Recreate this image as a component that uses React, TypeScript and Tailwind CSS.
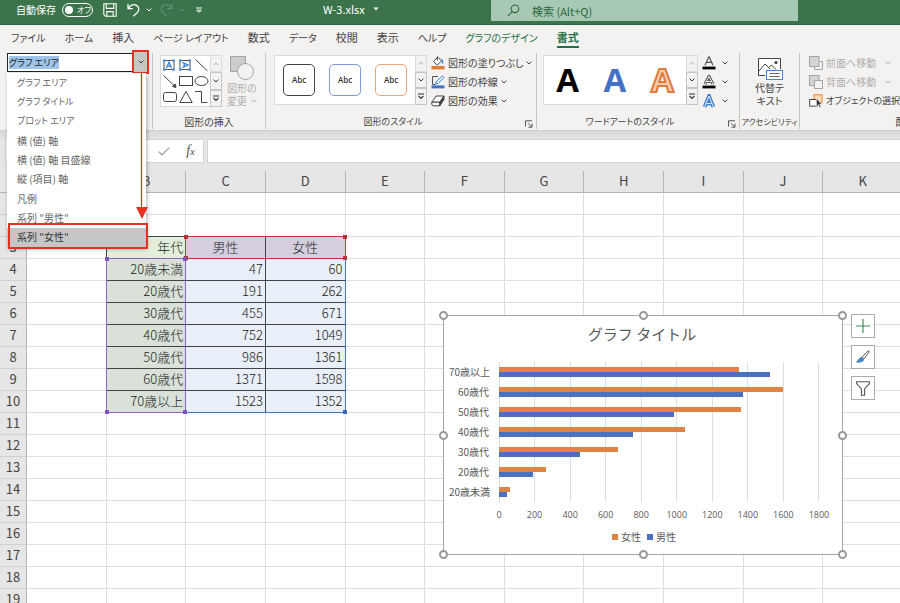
import { useEffect, useRef, type ReactNode } from "react";

/* ---------- data ---------- */

const TABS = ["ファイル", "ホーム", "挿入", "ページ レイアウト", "数式", "データ", "校閲", "表示", "ヘルプ"];
const KANJI_TABS = ["挿入", "数式", "校閲", "表示"];

const CHART_PARTS = [
  "グラフ エリア",
  "グラフ タイトル",
  "プロット エリア",
  "横 (値) 軸",
  "横 (値) 軸 目盛線",
  "縦 (項目) 軸",
  "凡例",
  '系列 "男性"',
  '系列 "女性"',
];

const COLUMNS = ["A", "B", "C", "D", "E", "F", "G", "H", "I", "J", "K"];

const DATA = [
  { age: "20歳未満", male: 47, female: 60 },
  { age: "20歳代", male: 191, female: 262 },
  { age: "30歳代", male: 455, female: 671 },
  { age: "40歳代", male: 752, female: 1049 },
  { age: "50歳代", male: 986, female: 1361 },
  { age: "60歳代", male: 1371, female: 1598 },
  { age: "70歳以上", male: 1523, female: 1352 },
];

const AXIS_MAX = 1800;
const AXIS_TICKS = [0, 200, 400, 600, 800, 1000, 1200, 1400, 1600, 1800];

/* ---------- small pieces ---------- */

function Chevron({ className = "" }: { className?: string }) {
  return (
    <svg viewBox="0 0 6 4" className={`h-1 w-1.5 shrink-0 ${className}`} fill="none" stroke="currentColor" strokeWidth="1">
      <path d="M0.6 0.6 L3 3 L5.4 0.6" />
    </svg>
  );
}

function GalleryScroll() {
  const cell = "flex flex-1 items-center justify-center border border-[#c8c6c4] bg-[#f3f2f1] text-[#333]";
  return (
    <div className="-my-px -mr-px flex w-3 shrink-0 flex-col">
      <button aria-label="前の行" className="flex flex-1 items-center justify-center border border-[#dddbd9] bg-[#f3f2f1] text-[#b5b5b5]">
        <Chevron className="rotate-180" />
      </button>
      <button aria-label="次の行" className={cell}>
        <Chevron />
      </button>
      <button aria-label="その他" className={cell}>
        <svg viewBox="0 0 8 7" className="h-[7px] w-2" fill="none" stroke="currentColor" strokeWidth="1.1">
          <path d="M1 1 H7 M1.6 3 L4 5.4 L6.4 3" />
        </svg>
      </button>
    </div>
  );
}

function Launcher() {
  return (
    <button aria-label="詳細設定" className="absolute right-0.5 bottom-0 flex h-2.5 w-2.5 items-center justify-center text-[#555]">
      <svg viewBox="0 0 8 8" className="h-2 w-2" fill="none" stroke="currentColor" strokeWidth="1">
        <path d="M0.5 6.5 V0.8 H7 M3 3.2 L6.6 6.8 M7 3.6 V7.2 H3.4" />
      </svg>
    </button>
  );
}

function Group({
  label,
  labelClass = "text-[10px]",
  className,
  launcher,
  children,
}: {
  label?: string;
  labelClass?: string;
  className: string;
  launcher?: boolean;
  children: ReactNode;
}) {
  return (
    <section className={`relative flex h-[76px] shrink-0 flex-col border-r border-[#c8c6c4] ${className}`}>
      <div className="flex flex-1 items-start">{children}</div>
      {label && (
        <h2 className={`text-center leading-[14px] whitespace-nowrap text-[#444] ${labelClass} ${launcher ? "pr-4" : ""}`}>{label}</h2>
      )}
      {launcher && <Launcher />}
    </section>
  );
}

/* ---------- title bar ---------- */

function TitleBar() {
  return (
    <header className="flex h-[25px] shrink-0 items-start border-b border-[#2b6440] bg-[#3b744b] pl-4 text-white">
      <div className="flex w-[307px] shrink-0 items-center pt-0.5">
        <label className="flex items-center gap-1.5 text-[10px] leading-4">
          自動保存
          <input type="checkbox" role="switch" className="sr-only" />
          <span className="flex h-3.5 w-[31px] items-center gap-1 rounded-full border border-white pl-0.5 text-[8px] leading-3">
            <span className="h-2 w-2 rounded-full bg-white" />
            オフ
          </span>
        </label>
        <button aria-label="上書き保存" className="ml-2.5">
          <svg viewBox="0 0 14 14" className="h-3.5 w-3.5" fill="none" stroke="currentColor" strokeWidth="1.1">
            <path d="M0.8 0.8 H13.2 V13.2 H2.4 L0.8 11.6 Z M3.2 0.8 V5.4 H10.8 V0.8 M3.8 13 V8.6 H10.2 V13" />
          </svg>
        </button>
        <button aria-label="元に戻す" className="ml-2.5 flex items-center gap-1.5">
          <svg viewBox="0 0 13 14" className="h-3.5 w-[13px]" fill="none" stroke="currentColor" strokeWidth="1.3">
            <path d="M1 0.8 V5.6 H5.8 M1.2 5.4 C3.4 2.4 6.4 1 9 2.2 C12.2 3.8 12.6 7.2 10.4 9.4 L6.4 13.2" />
          </svg>
          <Chevron />
        </button>
        <button aria-label="やり直し" disabled className="ml-2 flex items-center gap-1.5 text-[#62916f]">
          <svg viewBox="0 0 13 14" className="h-3.5 w-[13px]" fill="none" stroke="currentColor" strokeWidth="1.3">
            <path d="M12 0.8 V5.6 H7.2 M11.8 5.4 C9.6 2.4 6.6 1 4 2.2 C0.8 3.8 0.4 7.2 2.6 9.4 L6.6 13.2" />
          </svg>
          <Chevron />
        </button>
        <button aria-label="クイック アクセス ツール バーのユーザー設定" className="ml-2.5">
          <svg viewBox="0 0 8 7" className="h-[7px] w-2" fill="none" stroke="currentColor" strokeWidth="1">
            <path d="M1 1 H7 M1.8 3.2 H6.2 L4 5.4 Z" />
          </svg>
        </button>
      </div>
      <button className="flex w-[168px] shrink-0 items-center gap-2 pt-px text-[11px] leading-4">
        W-3.xlsx
        <svg viewBox="0 0 6 4" className="h-1 w-1.5" fill="currentColor">
          <path d="M0.4 0.4 H5.6 L3 3.4 Z" />
        </svg>
      </button>
      <div className="flex h-[21px] w-[307px] items-center gap-3 bg-[#a7c9b3] pl-4 text-[#2c6540]">
        <svg viewBox="0 0 13 13" className="h-[13px] w-[13px] shrink-0" fill="none" stroke="currentColor" strokeWidth="1.1">
          <circle cx="8" cy="4.8" r="3.8" />
          <path d="M5.2 7.6 L0.8 12.2" />
        </svg>
        <input
          type="search"
          aria-label="検索"
          placeholder="検索 (Alt+Q)"
          className="h-[18px] w-full bg-transparent text-[11px] leading-[18px] outline-none placeholder:text-[#2c6540]"
        />
      </div>
    </header>
  );
}

/* ---------- tabs ---------- */

function Tabs() {
  return (
    <nav className="flex h-[25px] shrink-0 items-start gap-[19px] bg-[#f3f2f1] pt-1 pl-[11px] whitespace-nowrap text-[#444]">
      {TABS.map((t) => (
        <button key={t} className={`leading-[17px] ${KANJI_TABS.includes(t) ? "text-[11px]" : "text-[10px]"}`}>
          {t}
        </button>
      ))}
      <button className="text-[10px] leading-[17px] text-[#1f7145]">グラフのデザイン</button>
      <button className="border-b-2 border-[#1f7145] text-[11px] leading-[17px] font-bold text-[#1f7145]">書式</button>
    </nav>
  );
}

/* ---------- ribbon ---------- */

function ElementPicker() {
  const box = useRef<HTMLInputElement>(null);
  useEffect(() => {
    box.current?.focus();
    box.current?.select();
  }, []);
  return (
    <div className="relative ml-[7px] flex h-[19px] w-[141px]">
      <input
        ref={box}
        aria-label="グラフ要素"
        defaultValue="グラフ エリア"
        className="min-w-0 flex-1 border border-r-0 border-[#222] bg-white pl-px text-[9px] text-[#222] outline-none selection:bg-[#9fc4ea] selection:text-[#222]"
      />
      <button aria-label="一覧を開く" className="-mt-[3px] -mr-px -mb-0.5 flex w-[17px] items-center justify-center border-2 border-[#e8301f] bg-[#c6c6c6] text-[#333]">
        <Chevron />
      </button>
      <ul
        role="listbox"
        aria-label="グラフ要素"
        className="absolute top-5 left-0 z-20 grid h-[174px] w-[139px] grid-rows-9 bg-white text-[10px] leading-4 text-[#666] shadow-[1px_2px_4px_rgba(0,0,0,0.3)]"
      >
        {CHART_PARTS.map((p, i) => {
          const last = i === CHART_PARTS.length - 1;
          return (
            <li
              key={p}
              role="option"
              aria-selected={last}
              className={`flex items-center pl-2.5 ${i < 3 ? "text-[9px]" : ""} ${last ? "bg-[#c6c6c6] text-[#333]" : ""}`}
            >
              {p}
            </li>
          );
        })}
      </ul>
      {/* callout: arrow from the drop-down button to the highlighted entry */}
      <svg viewBox="0 0 12 147" className="absolute top-5 left-[129px] z-30 h-[147px] w-3">
        <path d="M5.5 0 V138" stroke="#e8301f" strokeWidth="1.3" />
        <path d="M0 134 H12 L6 146 Z" fill="#e8301f" />
      </svg>
      <div className="absolute top-[170px] left-px z-30 h-[26px] w-[140px] border-2 border-[#e8301f]" />
    </div>
  );
}

function ShapesGallery() {
  return (
    <div className="ml-[7px] flex h-[52px] w-[62px] shrink-0 border border-[#dddbd9] bg-white">
      <svg viewBox="0 0 49 50" className="h-[50px] w-[49px] shrink-0" fill="none" stroke="#444" strokeWidth="1">
        <g stroke="#555">
          <rect x="3" y="4.5" width="10" height="9" />
          <rect x="19" y="4.5" width="10" height="9" />
        </g>
        <g fill="#4a8fd8" stroke="none">
          {[2, 11.5, 18, 27.5].map((x) => (
            <g key={x}>
              <rect x={x} y="3.4" width="2.4" height="2.4" />
              <rect x={x} y="12.4" width="2.4" height="2.4" />
            </g>
          ))}
        </g>
        <g stroke="#3b83d0" strokeWidth="1.3">
          <path d="M5.4 12 L8 6.2 L10.6 12 M6.4 10.2 H9.6" />
          <path d="M21.4 6.4 L27 9 L21.4 11.6 M23.2 7.4 V10.6" />
        </g>
        <path d="M34.5 3.5 L46.5 15" />
        <path d="M2.5 19.5 L13.5 30" />
        <path d="M15 31.4 L11.6 30.6 L14.2 28 Z" fill="#444" />
        <rect x="18.5" y="20.5" width="13" height="9" />
        <ellipse cx="40.5" cy="25" rx="6.5" ry="4.5" />
        <rect x="2.5" y="36.5" width="13" height="9" rx="2.2" />
        <path d="M18.8 46.5 L25 35.5 L31.2 46.5 Z" />
        <path d="M34 35.5 H40.5 V46.5 H46.5" />
      </svg>
      <GalleryScroll />
    </div>
  );
}

function RibbonRow({
  icon,
  label,
  disabled,
  size = "text-[10px]",
  menu = true,
}: {
  icon: ReactNode;
  label: string;
  disabled?: boolean;
  size?: string;
  menu?: boolean;
}) {
  return (
    <button disabled={disabled} className={`flex h-[19px] items-center gap-[3px] whitespace-nowrap ${size} ${disabled ? "text-[#b0aeac]" : "text-[#444]"}`}>
      {icon}
      {label}
      {menu && <Chevron className={disabled ? "ml-1.5" : ""} />}
    </button>
  );
}

const small = "h-3.5 w-3.5 shrink-0";

const FillIcon = (
  <svg viewBox="0 0 14 14" className={small} fill="none">
    <rect x="0.5" y="10" width="13" height="3.4" fill="#e07b39" />
    <path d="M2.4 5.4 L6.8 1.2 L10.6 5 L6.2 9 Z" fill="#fff" stroke="#444" />
    <path d="M6.4 0.4 V4.4" stroke="#444" />
    <path d="M10 3 C12 3.4 12.6 5.4 12.2 8.4 C11 7.4 10.6 6 10.6 4.6" fill="#2f7fd1" />
  </svg>
);

const OutlineIcon = (
  <svg viewBox="0 0 14 14" className={small} fill="none">
    <rect x="0.5" y="10.4" width="13" height="3" fill="#4472c4" />
    <path d="M7 1.5 H1.5 V9.5 H4" stroke="#555" />
    <path d="M11.4 0.8 L13 2.4 L7 8.4 L4.6 9.2 L5.2 6.8 Z" fill="#fff" stroke="#2f7fd1" />
  </svg>
);

const EffectIcon = (
  <svg viewBox="0 0 14 14" className={small} stroke="#444" strokeLinejoin="round">
    <path d="M0.8 8.2 L5.2 2 H13 L8.8 8.2 Z" fill="#fff" />
    <path d="M0.8 8.2 H8.8 V11.8 H2.4 Q0.8 11.8 0.8 10.2 Z" fill="#fff" />
    <path d="M8.8 8.2 L13 2 V5.4 L8.8 11.8 Z" fill="#444" />
  </svg>
);

const ForwardIcon = (
  <svg viewBox="0 0 14 14" className={small} fill="none" stroke="#a6a4a2">
    <path d="M10.5 5.5 H13.5 V13.5 H5.5 V11" />
    <rect x="0.5" y="0.5" width="9.5" height="10" fill="#d6d4d2" />
  </svg>
);

const BackwardIcon = (
  <svg viewBox="0 0 14 14" className={small} stroke="#a6a4a2">
    <rect x="0.5" y="0.5" width="9.5" height="10" fill="#d6d4d2" />
    <rect x="5.5" y="5.5" width="8" height="8" fill="#f3f2f1" />
  </svg>
);

const SelectionIcon = (
  <svg viewBox="0 0 14 14" className={small}>
    <rect x="5" y="0.8" width="8" height="8" fill="#fbd9b8" stroke="#e8833a" />
    <rect x="0.7" y="5.5" width="7.6" height="6.6" fill="#fff" stroke="#444" />
    <path d="M7.4 4.4 V12.4 L9.2 10.8 L10.6 13.6 L12 12.8 L10.6 10.2 H13 Z" fill="#333" stroke="#fff" strokeWidth="0.6" />
  </svg>
);

function LetterIcon({ kind }: { kind: "fill" | "outline" | "effect" }) {
  return (
    <svg viewBox="0 0 14 14" className={small} fill="none">
      {kind === "fill" && <path d="M3 9.2 L7 0.6 L11 9.2 M4.4 6.4 H9.6" stroke="#555" strokeWidth="1.2" />}
      {kind === "outline" && (
        <>
          <path d="M3 9.2 L7 1.2 L11 9.2 M4.6 6.6 H9.4" stroke="#444" strokeWidth="2.8" />
          <path d="M3 9.2 L7 1.2 L11 9.2 M4.6 6.6 H9.4" stroke="#fff" strokeWidth="1" />
        </>
      )}
      {kind === "effect" && (
        <>
          <path d="M2.6 13 L7 2 L11.4 13 M4.4 9.6 H9.6" stroke="#3d7bd0" strokeWidth="3.6" />
          <path d="M2.6 13 L7 2 L11.4 13 M4.4 9.6 H9.6" stroke="#e8f1fb" strokeWidth="1" />
        </>
      )}
      {kind !== "effect" && <rect x="0.5" y="10.6" width="13" height="2.8" fill="#000" />}
    </svg>
  );
}

function Ribbon() {
  return (
    <div className="flex h-[81px] shrink-0 border-b border-[#cfcdcb] bg-[#f3f2f1] pt-[3px]">
      <Group className="w-[153px]">
        <ElementPicker />
      </Group>

      <Group className="w-[113px]" label="図形の挿入">
        <div className="flex items-start pt-0.5">
          <ShapesGallery />
          <button disabled className="flex w-10 flex-col items-center text-[10px] leading-[13px] text-[#b0aeac]">
            <svg viewBox="0 0 26 26" className="h-[26px] w-[26px]" stroke="#a6a4a2" fill="#f3f2f1">
              <rect x="1.5" y="1.5" width="15" height="15" fill="#cfcdcb" />
              <circle cx="16.5" cy="16.5" r="8" />
            </svg>
            図形の
            <span className="flex items-center gap-1">
              変更
              <Chevron />
            </span>
          </button>
        </div>
      </Group>

      <Group className="w-[271px]" label="図形のスタイル" labelClass="text-[9px]" launcher>
        <div className="mt-0.5 ml-2 flex h-[50px] w-[153px] shrink-0 border border-[#dddbd9] bg-white">
          <div className="flex flex-1 items-center justify-between px-2 font-['Open_Sans'] text-[8px] font-semibold text-[#333]">
            <button className="h-8 w-8 rounded-[5px] border border-[#444]">Abc</button>
            <button className="h-8 w-8 rounded-[5px] border border-[#7d9fd3]">Abc</button>
            <button className="h-8 w-8 rounded-[5px] border border-[#eda677]">Abc</button>
          </div>
          <GalleryScroll />
        </div>
        <div className="ml-1 flex flex-col">
          <RibbonRow icon={FillIcon} label="図形の塗りつぶし" />
          <RibbonRow icon={OutlineIcon} label="図形の枠線" />
          <RibbonRow icon={EffectIcon} label="図形の効果" />
        </div>
      </Group>

      <Group className="w-[203px]" label="ワードアートのスタイル" labelClass="text-[9px]" launcher>
        <div className="mt-0.5 ml-1.5 flex h-[50px] w-[155px] shrink-0 border border-[#dddbd9] bg-white">
          <div className="flex flex-1 items-center justify-around font-['Open_Sans'] text-[33px] leading-[48px] font-bold">
            <button className="text-black">A</button>
            <button className="text-[#4472c4]">A</button>
            <button className="text-[#f6cdb0] [-webkit-text-stroke:2px_#e07b39]">A</button>
          </div>
          <GalleryScroll />
        </div>
        <div className="ml-1 flex flex-col text-[#444]">
          {(["fill", "outline", "effect"] as const).map((k) => (
            <button key={k} aria-label={k} className="flex h-[19px] items-center gap-1.5">
              <LetterIcon kind={k} />
              <Chevron />
            </button>
          ))}
        </div>
      </Group>

      <Group className="w-[60px]" label="アクセシビリティ" labelClass="text-[8px]">
        <button className="flex w-full flex-col items-center pt-1 text-[10px] leading-[13px] text-[#444]">
          <svg viewBox="0 0 26 24" className="h-6 w-[26px]" fill="none" stroke="#444">
            <path d="M8 18.5 H1.5 V1.5 H23.5 V12" fill="#fff" />
            <path d="M2 14 L8 7 L13 12 M11.5 10.5 L14.5 8 L19 12.5" />
            <circle cx="19" cy="5.5" r="1.6" fill="#444" stroke="none" />
            <rect x="9.5" y="13.5" width="16" height="9" fill="#fff" stroke="#3b8ad8" />
            <path d="M12.5 16.5 H22.5 M12.5 19.5 H22.5" stroke="#666" />
          </svg>
          代替テ
          <br />
          キスト
        </button>
      </Group>

      <Group className="w-[212px]" label="配置">
        <div className="ml-[9px] flex flex-col">
          <RibbonRow icon={ForwardIcon} label="前面へ移動" disabled />
          <RibbonRow icon={BackwardIcon} label="背面へ移動" disabled />
          <RibbonRow icon={SelectionIcon} label="オブジェクトの選択と表示" size="text-[9px]" menu={false} />
        </div>
      </Group>
    </div>
  );
}

/* ---------- formula bar ---------- */

function FormulaBar() {
  return (
    <div className="flex h-10 shrink-0 items-start gap-[3px] bg-linear-to-b from-[#d9d9d9] to-[#e6e6e6] to-25% pt-2 pl-[5px]">
      <div className="flex h-6 w-[199px] shrink-0 items-center justify-end gap-4 border border-[#d4d4d4] bg-white pr-2">
        <svg viewBox="0 0 12 9" className="h-[9px] w-3" fill="none" stroke="#b0b0b0" strokeWidth="1.6">
          <path d="M0.8 4.6 L4 7.8 L11.2 0.8" />
        </svg>
        <button aria-label="関数の挿入" className="font-['Liberation_Serif'] text-sm text-[#555] italic">
          f<span className="text-[11px]">x</span>
        </button>
      </div>
      <input aria-label="数式バー" className="h-6 min-w-0 flex-1 border border-r-0 border-[#d4d4d4] bg-white px-1 text-xs outline-none" />
    </div>
  );
}

/* ---------- worksheet ---------- */

function RangeFrame({ className, handle }: { className: string; handle: string }) {
  return (
    <div className={`pointer-events-none absolute z-10 border ${className}`}>
      <i className={`absolute -top-0.5 -left-0.5 h-1 w-1 ${handle}`} />
      <i className={`absolute -top-0.5 -right-0.5 h-1 w-1 ${handle}`} />
      <i className={`absolute -bottom-0.5 -left-0.5 h-1 w-1 ${handle}`} />
      <i className={`absolute -right-0.5 -bottom-0.5 h-1 w-1 ${handle}`} />
    </div>
  );
}

function Cell({ row, col }: { row: number; col: string }) {
  const base = "relative h-[22px] border-r border-b pt-0 pb-0.5 pl-0";
  const record = DATA[row - 4];
  if (row === 2 && (col === "B" || col === "C" || col === "D")) {
    return <td className={`${base} border-r-[#dedede] border-b-[#444]`} />;
  }
  if (row === 3) {
    if (col === "A") return <td className={`${base} border-r-[#444] border-b-[#dedede]`} />;
    if (col === "B") return <td className={`${base} border-[#444] bg-[#e2eeda] pr-0.5 text-right`}>年代</td>;
    if (col === "C")
      return (
        <td className={`${base} border-[#444] bg-[#d5cedf] text-center`}>
          男性
          <RangeFrame className="-top-px -left-px h-[23px] w-[calc(200%+3px)] border-[#c0343c]" handle="bg-[#b5323a]" />
        </td>
      );
    if (col === "D") return <td className={`${base} border-[#444] bg-[#d5cedf] text-center`}>女性</td>;
  }
  if (record) {
    if (col === "B")
      return (
        <td className={`${base} border-[#444] bg-[#d9e1d8] pr-0.5 text-right`}>
          {record.age}
          {row === 4 && <RangeFrame className="-top-px -left-px h-[155px] w-[calc(100%+2px)] border-[#8c62c4]" handle="bg-[#7f56bd]" />}
        </td>
      );
    if (col === "C")
      return (
        <td className={`${base} border-[#444] bg-[#e9eff8] pr-0.5 text-right`}>
          {record.male}
          {row === 10 && (
            <div className="pointer-events-none absolute -bottom-px left-0 z-10 h-[154px] w-[calc(200%+2px)] border-r border-b border-[#4472c4]">
              <i className="absolute -right-0.5 -bottom-0.5 h-1 w-1 bg-[#3a66b8]" />
            </div>
          )}
        </td>
      );
    if (col === "D") return <td className={`${base} border-[#444] bg-[#e9eff8] pr-0.5 text-right`}>{record.female}</td>;
  }
  return <td className={`${base} border-[#dedede]`} />;
}

function Sheet() {
  const rows = Array.from({ length: 19 }, (_, i) => i + 1);
  return (
    <table className="w-[calc(100%+3px)] table-fixed border-separate border-spacing-0 text-[13px] leading-[19px] font-light text-[#222]">
      <thead>
        <tr className="bg-[#e6e6e6]">
          <th className="h-[22px] w-[27px] border-r border-b border-[#b4b4b4] p-0" />
          {COLUMNS.map((c) => (
            <th key={c} scope="col" className="border-r border-b border-[#b4b4b4] px-0 pt-0 pb-0.5 text-[13px] font-normal text-[#444]">
              {c}
            </th>
          ))}
        </tr>
      </thead>
      <tbody>
        {rows.map((r) => (
          <tr key={r}>
            <th scope="row" className="border-r border-b border-r-[#b4b4b4] border-b-[#cfcfcf] bg-[#e6e6e6] px-0 pt-0 pb-0.5 text-[13px] font-normal text-[#444]">
              {r}
            </th>
            {COLUMNS.map((c) => (
              <Cell key={c} row={r} col={c} />
            ))}
          </tr>
        ))}
      </tbody>
    </table>
  );
}

/* ---------- chart ---------- */

function Handle({ className }: { className: string }) {
  return <i className={`absolute h-[9px] w-[9px] rounded-full border-2 border-[#999] bg-white ${className}`} />;
}

function Chart() {
  return (
    <figure className="absolute top-[144px] left-[443px] z-10 h-[240px] w-[400px] border border-[#a6a6a6] bg-white pt-1.5 pr-[23px] pl-[5px] text-[#595959]">
      <figcaption className="pl-4 text-center text-[15px] leading-6 [font-feature-settings:normal]">グラフ タイトル</figcaption>
      <div className="mt-4 flex">
        <div className="flex w-[50px] shrink-0 flex-col pr-2.5 text-right text-[10px] leading-5 whitespace-nowrap">
          {[...DATA].reverse().map((d) => (
            <span key={d.age}>{d.age}</span>
          ))}
        </div>
        <div className="relative h-[140px] flex-1">
          <div className="absolute inset-0 flex justify-between">
            {AXIS_TICKS.map((t) => (
              <i key={t} className="w-px bg-[#dedede]" />
            ))}
          </div>
          <div className="relative flex flex-col">
            {[...DATA].reverse().map((d) => (
              <div key={d.age} className="flex h-5 flex-col justify-center">
                <div className="h-[5px] bg-[#e08344]" style={{ width: `${(d.female / AXIS_MAX) * 100}%` }} />
                <div className="h-[5px] bg-[#4a70c0]" style={{ width: `${(d.male / AXIS_MAX) * 100}%` }} />
              </div>
            ))}
          </div>
        </div>
      </div>
      <div className="mt-1.5 ml-[50px] flex justify-between font-['Open_Sans'] text-[9px] leading-[14px]">
        {AXIS_TICKS.map((t) => (
          <span key={t} className="flex w-0 justify-center">
            {t}
          </span>
        ))}
      </div>
      <div className="mt-2 flex justify-center gap-1.5 pl-5 text-[10px] leading-[14px]">
        <span className="flex items-center gap-[3px]">
          <i className="h-1.5 w-1.5 bg-[#e08344]" />
          女性
        </span>
        <span className="flex items-center gap-[3px]">
          <i className="h-1.5 w-1.5 bg-[#4a70c0]" />
          男性
        </span>
      </div>
      <Handle className="-top-[5px] -left-[5px]" />
      <Handle className="-top-[5px] left-[195px]" />
      <Handle className="-top-[5px] -right-[5px]" />
      <Handle className="top-[115px] -left-[5px]" />
      <Handle className="top-[115px] -right-[5px]" />
      <Handle className="-bottom-[5px] -left-[5px]" />
      <Handle className="-bottom-[5px] left-[195px]" />
      <Handle className="-right-[5px] -bottom-[5px]" />
    </figure>
  );
}

function ChartButtons() {
  const button = "flex h-6 w-6 items-center justify-center border border-[#ababab] bg-white";
  return (
    <div className="absolute top-[143px] left-[851px] z-10 flex flex-col gap-[7px]">
      <button aria-label="グラフ要素" className={button}>
        <svg viewBox="0 0 14 14" className="h-3.5 w-3.5" stroke="#3f8f5b" strokeWidth="1.2">
          <path d="M7 0 V14 M0 7 H14" />
        </svg>
      </button>
      <button aria-label="グラフ スタイル" className={button}>
        <svg viewBox="0 0 14 14" className="h-3.5 w-3.5">
          <path d="M12.8 0.8 L13.2 2 L7.8 9 L5.8 7.4 L11.6 1.2 Z" fill="#fff" stroke="#444" strokeWidth="0.9" />
          <path d="M5.4 7.6 L7.8 9.6 C7.2 11.8 4 12.8 0.4 12 C2.2 11.4 2.4 8 5.4 7.6 Z" fill="#4a86cf" stroke="#2e69b3" strokeWidth="0.6" />
        </svg>
      </button>
      <button aria-label="グラフ フィルター" className={button}>
        <svg viewBox="0 0 14 15" className="h-[15px] w-3.5" fill="none" stroke="#555" strokeWidth="1.1">
          <path d="M0.6 0.8 H13.4 V2.6 L8.6 8 V14.2 H5.4 V8 L0.6 2.6 Z" />
        </svg>
      </button>
    </div>
  );
}

/* ---------- page ---------- */

export default function App() {
  return (
    <div className="flex h-screen flex-col overflow-hidden bg-white font-['Noto_Sans_CJK_JP',sans-serif] [font-feature-settings:'palt']">
      <TitleBar />
      <Tabs />
      <Ribbon />
      <FormulaBar />
      <main className="relative flex-1">
        <Sheet />
        <Chart />
        <ChartButtons />
      </main>
    </div>
  );
}
